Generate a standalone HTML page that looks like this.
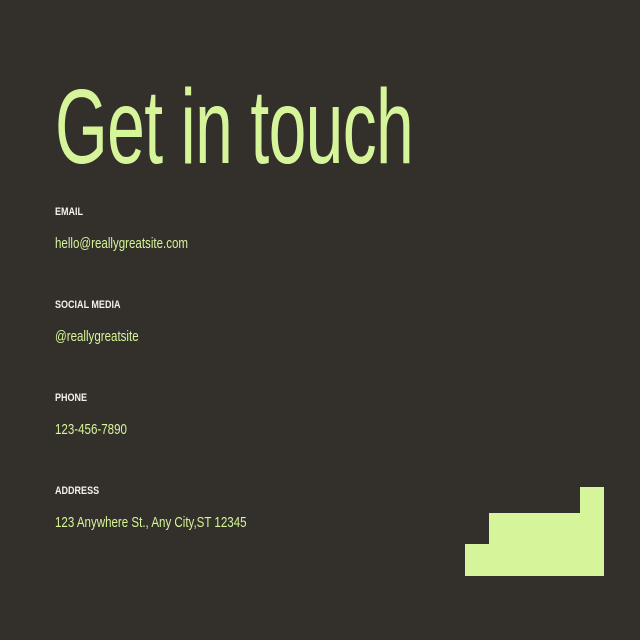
<!DOCTYPE html>
<html><head><meta charset="utf-8"><style>
html,body{margin:0;padding:0}
body{width:640px;height:640px;background:#332f2a;position:relative;overflow:hidden;font-family:"Liberation Sans",sans-serif}
.t{position:absolute;white-space:nowrap;transform-origin:0 0;line-height:1}
.h{left:55px;top:74px;font-size:106px;color:#d6f59b;transform:scaleX(0.64);letter-spacing:-1px}
.l{left:55px;font-size:11px;font-weight:bold;color:#f2f2ea;transform:scaleX(0.82)}
.v{left:55px;font-size:15px;color:#d6f59b;transform:scaleX(0.77)}
.b{position:absolute;background:#d6f59b}
</style></head><body>
<div class="t h">Get in touch</div>
<div class="t l" style="top:207px">EMAIL</div>
<div class="t v" style="top:236px">hello@reallygreatsite.com</div>
<div class="t l" style="top:300px">SOCIAL MEDIA</div>
<div class="t v" style="top:329px">@reallygreatsite</div>
<div class="t l" style="top:393px">PHONE</div>
<div class="t v" style="top:422px">123-456-7890</div>
<div class="t l" style="top:486px">ADDRESS</div>
<div class="t v" style="top:515px">123 Anywhere St., Any City,ST 12345</div>
<div class="b" style="left:580px;top:487px;width:24px;height:89px"></div>
<div class="b" style="left:489px;top:513px;width:115px;height:63px"></div>
<div class="b" style="left:465px;top:544px;width:139px;height:32px"></div>
</body></html>
